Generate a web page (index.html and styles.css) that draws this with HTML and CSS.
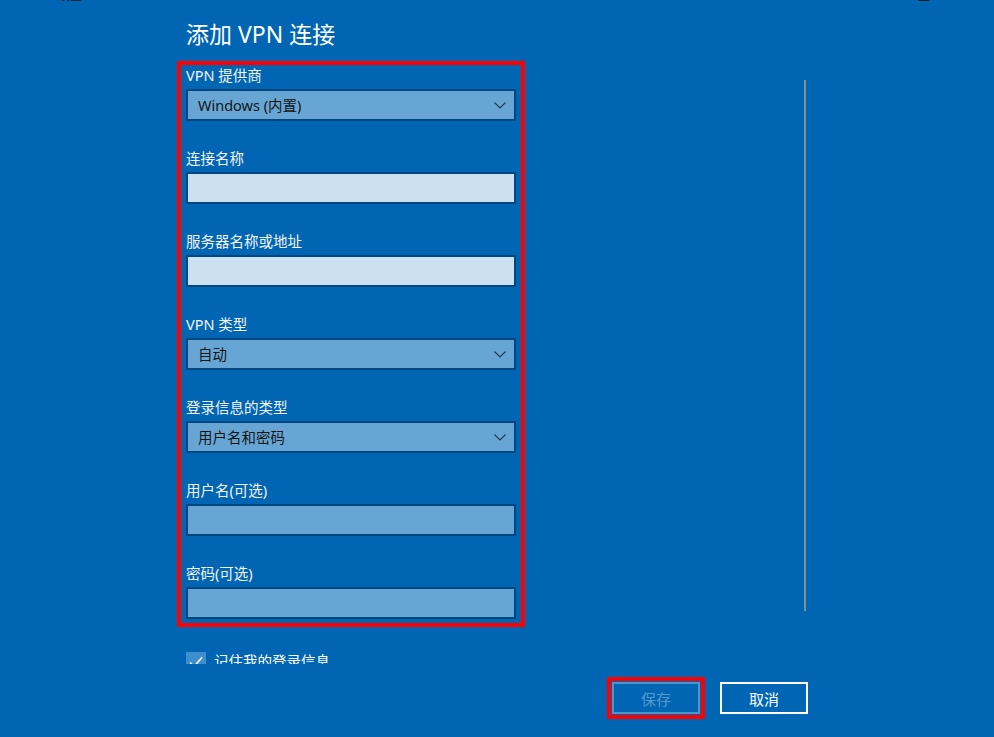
FILE: index.html
```html
<!DOCTYPE html>
<html lang="zh-CN">

<head>
  <meta charset="UTF-8">
  <title>添加 VPN 连接</title>
  <link rel="stylesheet" href="styles.css">
</head>

<body>

  <div class="titlebar">
    <span class="tb-back">←</span>
    <span class="tb-title">设置</span>
    <span class="tb-spacer"></span>
    <span class="tb-min">—</span>
    <span class="tb-close">✕</span>
  </div>

  <div class="dialog">
    <h1>添加 VPN 连接</h1>

    <div class="scroll">
      <div class="form">
        <div class="field">
          <label>VPN 提供商</label>
          <div class="select">
            <span>Windows (内置)</span>
            <svg class="chevron" width="12" height="7" viewBox="0 0 12 7"><path d="M0.5 0.5 L6 6 L11.5 0.5" fill="none" stroke="#24384a" stroke-width="1.1"/></svg>
          </div>
        </div>

        <div class="field">
          <label>连接名称</label>
          <div class="input"></div>
        </div>

        <div class="field">
          <label>服务器名称或地址</label>
          <div class="input"></div>
        </div>

        <div class="field">
          <label>VPN 类型</label>
          <div class="select">
            <span>自动</span>
            <svg class="chevron" width="12" height="7" viewBox="0 0 12 7"><path d="M0.5 0.5 L6 6 L11.5 0.5" fill="none" stroke="#24384a" stroke-width="1.1"/></svg>
          </div>
        </div>

        <div class="field">
          <label>登录信息的类型</label>
          <div class="select">
            <span>用户名和密码</span>
            <svg class="chevron" width="12" height="7" viewBox="0 0 12 7"><path d="M0.5 0.5 L6 6 L11.5 0.5" fill="none" stroke="#24384a" stroke-width="1.1"/></svg>
          </div>
        </div>

        <div class="field">
          <label>用户名(可选)</label>
          <div class="input muted"></div>
        </div>

        <div class="field">
          <label>密码(可选)</label>
          <div class="input muted"></div>
        </div>
      </div>

      <div class="remember">
        <span class="checkbox">
          <svg width="20" height="20" viewBox="0 0 20 20"><path d="M4 10.5 L8 14.5 L16 5.5" fill="none" stroke="#fff" stroke-width="1.6"/></svg>
        </span>
        <span>记住我的登录信息</span>
      </div>

      <div class="scrollbar"></div>
    </div>

    <div class="footer">
      <button class="btn marked" disabled>保存</button>
      <button class="btn">取消</button>
    </div>
  </div>

</body>

</html>
```

FILE: styles.css
```css
body {
  margin: 0;
  background-color: #0066b3;
  font-family: "Noto Sans", "Noto Sans CJK SC", sans-serif;
  color: #fff;
  height: 737px;
  overflow: hidden;
}

.titlebar {
  height: 3px;
  overflow: hidden;
  display: flex;
  align-items: flex-end;
  color: #1b1b1b;
  font-size: 12px;
  line-height: 14px;
}

.tb-back {
  margin-left: 18px;
}

.tb-title {
  margin-left: 28px;
}

.tb-spacer {
  flex: 1;
}

.tb-min {
  margin-right: 36px;
  line-height: 6px;
}

.tb-close {
  margin-right: 18px;
}

.dialog {
  padding-left: 170px;
  width: 640px;
}

h1 {
  margin: 15px 0 0 16px;
  font-size: 23px;
  line-height: 32px;
  font-weight: normal;
}

.scroll {
  position: relative;
  height: 608px;
  margin-top: 6px;
  padding: 9px 0 0 11px;
  box-sizing: border-box;
  overflow: hidden;
}

.form {
  width: 340px;
  padding: 1px 5px 4px;
  box-sizing: border-box;
  outline: 4px solid #ff0000;
}

.field {
  margin-bottom: 28px;
}

.field:last-child {
  margin-bottom: 0;
}

label {
  display: block;
  font-size: 14.5px;
  line-height: 19px;
  margin-bottom: 4px;
  color: #f4f4f4;
}

.select,
.input {
  height: 32px;
  box-sizing: border-box;
  border: 2px solid #00477f;
  background-color: #67a6d4;
}

.select {
  display: flex;
  align-items: center;
  justify-content: space-between;
  padding: 0 8px 2px 10px;
  font-size: 14.5px;
  color: #151515;
}

.chevron {
  margin-top: 3px;
}

.input {
  background-color: #cbe0f0;
}

.input.muted {
  background-color: #67a6d4;
}

.remember {
  display: flex;
  align-items: flex-start;
  margin-top: 28px;
  padding-left: 5px;
  font-size: 14.5px;
  line-height: 20px;
}

.checkbox {
  width: 20px;
  height: 20px;
  margin-top: 1px;
  margin-right: 8px;
  background-color: #3f8fd0;
}

.checkbox svg {
  display: block;
}

.scrollbar {
  position: absolute;
  left: 634px;
  top: 24px;
  width: 2px;
  height: 531px;
  background-color: #8a8d90;
}

.footer {
  display: flex;
  justify-content: flex-end;
  gap: 20px;
  padding: 18px 2px 0 0;
}

.btn {
  width: 88px;
  height: 32px;
  padding: 0;
  border: 2px solid #fff;
  background: transparent;
  color: #fff;
  font-family: "Noto Sans", "Noto Sans CJK SC", sans-serif;
  font-size: 15px;
}

.btn:disabled {
  border-color: rgba(255, 255, 255, 0.3);
  color: rgba(255, 255, 255, 0.35);
}

.btn.marked {
  outline: 4px solid #ff0000;
  outline-offset: 1px;
}
```
